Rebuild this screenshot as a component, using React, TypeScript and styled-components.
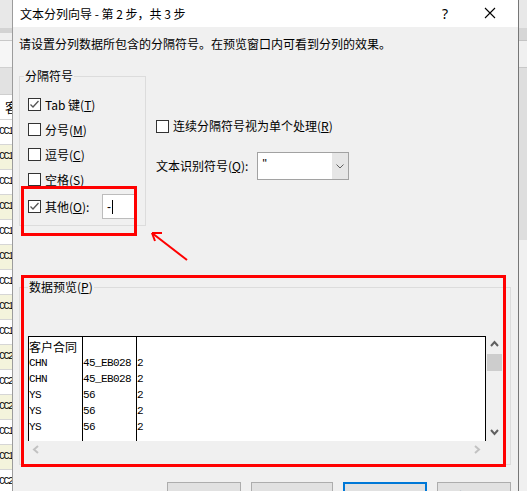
import React from 'react';
import styled, { createGlobalStyle } from 'styled-components';

const GlobalStyle = createGlobalStyle`
  html, body {
    margin: 0;
    padding: 0;
  }
  body {
    width: 527px;
    height: 491px;
    overflow: hidden;
    background: #f0f0f0;
    font-family: "Noto Sans CJK SC", "Microsoft YaHei", sans-serif;
    font-size: 12px;
    color: #000;
  }
`;

const Screen = styled.div`
  display: flex;
  width: 527px;
  height: 491px;
  overflow: hidden;
`;

// Excel sheet peeking out behind the dialog
const SheetStrip = styled.div<{ $width: number }>`
  width: ${(p) => p.$width}px;
  flex: none;
  display: flex;
  flex-direction: column;
  overflow: hidden;
  background: #f0f0f0;
`;

const Band = styled.div<{ $h: number; $bg: string; $line?: string }>`
  height: ${(p) => p.$h}px;
  flex: none;
  box-sizing: border-box;
  background: ${(p) => p.$bg};
  border-bottom: ${(p) => (p.$line ? `1px solid ${p.$line}` : 'none')};
`;

const SheetRow = styled.div<{ $alt?: boolean; $head?: boolean }>`
  height: 25px;
  flex: none;
  box-sizing: border-box;
  border-bottom: 1px solid #d6d6d6;
  background: ${(p) => (p.$alt ? '#f4f4dc' : '#ffffff')};
  white-space: nowrap;
  line-height: 24px;
  font-family: ${(p) =>
    p.$head ? '"Noto Sans CJK SC", sans-serif' : '"Liberation Mono", monospace'};
  font-size: ${(p) => (p.$head ? '13px' : '10px')};
  letter-spacing: ${(p) => (p.$head ? '0' : '-1.5px')};
  padding-left: ${(p) => (p.$head ? '5px' : '0')};
  text-indent: ${(p) => (p.$head ? '0' : '-1px')};
`;

const Dialog = styled.div`
  width: 507px;
  flex: none;
  box-sizing: border-box;
  border-left: 1px solid #9c9c9c;
  border-right: 1px solid #767676;
  background: #f0f0f0;
  display: flex;
  flex-direction: column;
`;

const TitleBar = styled.div`
  height: 27px;
  flex: none;
  background: #fff;
  display: flex;
  align-items: center;
  padding: 0 5px 0 7px;
`;

const Title = styled.div`
  flex: 1;
  line-height: 16px;
  white-space: pre;
`;

const HelpButton = styled.div`
  width: 30px;
  height: 27px;
  display: flex;
  align-items: center;
  justify-content: center;
  font-family: "Noto Sans", sans-serif;
  font-size: 14px;
  margin-right: 7px;
`;

const CloseButton = styled.div`
  width: 46px;
  height: 27px;
  display: flex;
  align-items: center;
  justify-content: center;
  padding-bottom: 2px;
  box-sizing: border-box;
`;

const Body = styled.div`
  flex: 1;
  position: relative;
  display: flex;
  flex-direction: column;
  padding: 9px 7px 0 6px;
`;

const Intro = styled.div`
  line-height: 16px;
  white-space: nowrap;
`;

const Options = styled.div`
  display: flex;
  margin-top: 16px;
`;

const GroupBox = styled.fieldset<{ $width: number; $pad: string }>`
  width: ${(p) => p.$width}px;
  box-sizing: border-box;
  min-width: 0;
  margin: 0;
  padding: ${(p) => p.$pad};
  border: 1px solid #dcdcdc;
`;

const GroupLegend = styled.legend`
  padding: 0 1px;
  line-height: 16px;
  font-size: 12px;
`;

const Key = styled.span`
  text-decoration: underline;
  text-underline-offset: 1px;
`;

const CheckRow = styled.div<{ $h?: number; $mt?: number; $ml?: number }>`
  display: flex;
  align-items: center;
  gap: 4px;
  height: ${(p) => p.$h ?? 25}px;
  margin-top: ${(p) => p.$mt ?? 0}px;
  margin-left: ${(p) => p.$ml ?? 4}px;
  line-height: 16px;
  white-space: nowrap;
`;

const Box = styled.span`
  width: 13px;
  height: 13px;
  box-sizing: border-box;
  border: 1px solid #333;
  background: #fff;
  flex: none;
  display: flex;
`;

const OtherLabel = styled.span`
  width: 53px;
  flex: none;
`;

const TextInput = styled.div`
  width: 35px;
  height: 25px;
  box-sizing: border-box;
  border: 1px solid #bcbcbc;
  background: #fff;
  display: flex;
  align-items: center;
  padding-left: 4px;
  font-family: "Liberation Sans", sans-serif;
`;

const Caret = styled.span`
  width: 1px;
  height: 14px;
  background: #000;
  margin-left: 1px;
`;

const RightColumn = styled.div`
  display: flex;
  flex-direction: column;
  margin-left: 10px;
  padding-top: 50px;
`;

const QualifierRow = styled.div`
  display: flex;
  align-items: center;
  margin-top: 18px;
  white-space: nowrap;
  line-height: 16px;
`;

const Combo = styled.div`
  width: 92px;
  height: 28px;
  margin-left: 9px;
  box-sizing: border-box;
  border: 1px solid #a2a2a2;
  background: #fff;
  display: flex;
`;

const ComboValue = styled.div`
  flex: 1;
  padding: 3px 0 0 4px;
  font-family: "Liberation Sans", sans-serif;
  font-size: 12px;
`;

const ComboDrop = styled.div`
  width: 16px;
  background: #e6e6e6;
  display: flex;
  align-items: center;
  justify-content: center;
`;

const PreviewArea = styled.div`
  display: grid;
  grid-template-columns: 458px 18px;
  grid-template-rows: 105px 17px;
`;

const Table = styled.div`
  display: flex;
  background: #fff;
  border-top: 1px solid #000;
  border-right: 1px solid #000;
`;

const Column = styled.div<{ $width: number }>`
  width: ${(p) => p.$width}px;
  flex: none;
  box-sizing: border-box;
  border-left: 1px solid #000;
  padding-top: 2px;
`;

const Cell = styled.div<{ $cjk?: boolean }>`
  height: 16px;
  line-height: 16px;
  white-space: nowrap;
  font-family: ${(p) =>
    p.$cjk ? '"Noto Sans CJK SC", sans-serif' : '"Liberation Mono", monospace'};
  font-size: ${(p) => (p.$cjk ? '12px' : '11px')};
  letter-spacing: ${(p) => (p.$cjk ? '0' : '-0.6px')};
`;

const VScroll = styled.div`
  display: flex;
  flex-direction: column;
  background: #f0f0f0;
`;

const ScrollButton = styled.div`
  width: 17px;
  height: 17px;
  flex: none;
  display: flex;
  align-items: center;
  justify-content: center;
`;

const Thumb = styled.div`
  width: 15px;
  height: 17px;
  margin: 1px 0 0 1px;
  background: #cdcdcd;
`;

const Spacer = styled.div`
  flex: 1;
`;

const HScroll = styled.div`
  display: flex;
  justify-content: space-between;
  background: #f0f0f0;
`;

const Buttons = styled.div`
  display: flex;
  justify-content: flex-end;
  gap: 10px;
  margin-top: 17px;
`;

const Button = styled.div<{ $width: number; $focused?: boolean }>`
  width: ${(p) => p.$width}px;
  height: 28px;
  box-sizing: border-box;
  flex: none;
  background: #e1e1e1;
  border: ${(p) => (p.$focused ? '2px solid #0078d7' : '1px solid #adadad')};
  display: flex;
  align-items: center;
  justify-content: center;
`;

// red annotation marks drawn over the dialog
const RedFrame = styled.div<{ $x: number; $y: number; $w: number; $h: number }>`
  position: absolute;
  left: ${(p) => p.$x}px;
  top: ${(p) => p.$y}px;
  width: ${(p) => p.$w}px;
  height: ${(p) => p.$h}px;
  box-sizing: border-box;
  border: 3px solid #ff0000;
  pointer-events: none;
`;

const Arrow = styled.svg`
  position: absolute;
  left: 137px;
  top: 203px;
`;

function Check({ checked }: { checked?: boolean }) {
  return (
    <Box>
      {checked && (
        <svg width="11" height="11" viewBox="0 0 11 11">
          <polyline
            points="1.5,5.5 4,8 9.5,2"
            fill="none"
            stroke="#555"
            strokeWidth="1.3"
          />
        </svg>
      )}
    </Box>
  );
}

function Chevron({ dir, color }: { dir: 'up' | 'down' | 'left' | 'right'; color: string }) {
  const pts = {
    up: '1,6 4.5,2 8,6',
    down: '1,2 4.5,6 8,2',
    left: '6,1 2,4.5 6,8',
    right: '2,1 6,4.5 2,8',
  }[dir];
  return (
    <svg width="9" height="9" viewBox="0 0 9 9">
      <polyline points={pts} fill="none" stroke={color} strokeWidth="2" />
    </svg>
  );
}

const sheetLabels = [
  'CC1', 'CC1', 'CC1', 'CC1', 'CC1', 'CC1', 'CC1', 'CC1',
  'CC1', 'CC2', 'CC2', 'CC2', 'CC1', 'CC1', 'CC2',
];

const previewRows = [
  ['CHN', '45_EB028', '2'],
  ['CHN', '45_EB028', '2'],
  ['YS', '56', '2'],
  ['YS', '56', '2'],
  ['YS', '56', '2'],
];

export default function App() {
  return (
    <Screen>
      <GlobalStyle />
      <SheetStrip $width={12}>
        <Band $h={28} $bg="#e8e8e8" />
        <Band $h={5} $bg="#d3d3d3" />
        <Band $h={8} $bg="#f0f0f0" $line="#c8c8c8" />
        <Band $h={27} $bg="#f6f6f6" $line="#d0d0d0" />
        <Band $h={27} $bg="#e2e2e2" $line="#cfcfcf" />
        <SheetRow $head>客户合同</SheetRow>
        {sheetLabels.map((label, i) => (
          <SheetRow key={i} $alt={i % 2 === 1}>
            {label}00
          </SheetRow>
        ))}
      </SheetStrip>

      <Dialog>
        <TitleBar>
          <Title>文本分列向导 - 第 2 步，共 3 步</Title>
          <HelpButton>?</HelpButton>
          <CloseButton>
            <svg width="12" height="12" viewBox="0 0 12 12">
              <path d="M1 1 L11 11 M11 1 L1 11" stroke="#000" strokeWidth="1.1" />
            </svg>
          </CloseButton>
        </TitleBar>

        <Body>
          <Intro>请设置分列数据所包含的分隔符号。在预览窗口内可看到分列的效果。</Intro>

          <Options>
            <GroupBox $width={127} $pad="8px 4px 6px 4px">
              <GroupLegend>分隔符号</GroupLegend>
              <CheckRow>
                <Check checked />
                <span>
                  Tab 键(<Key>T</Key>)
                </span>
              </CheckRow>
              <CheckRow>
                <Check />
                <span>
                  分号(<Key>M</Key>)
                </span>
              </CheckRow>
              <CheckRow>
                <Check />
                <span>
                  逗号(<Key>C</Key>)
                </span>
              </CheckRow>
              <CheckRow>
                <Check />
                <span>
                  空格(<Key>S</Key>)
                </span>
              </CheckRow>
              <CheckRow $mt={2}>
                <Check checked />
                <OtherLabel>
                  其他(<Key>O</Key>):
                </OtherLabel>
                <TextInput>
                  -<Caret />
                </TextInput>
              </CheckRow>
            </GroupBox>

            <RightColumn>
              <CheckRow $h={16} $ml={0}>
                <Check />
                <span>
                  连续分隔符号视为单个处理(<Key>R</Key>)
                </span>
              </CheckRow>
              <QualifierRow>
                <span>
                  文本识别符号(<Key>Q</Key>):
                </span>
                <Combo>
                  <ComboValue>"</ComboValue>
                  <ComboDrop>
                    <svg width="8" height="5" viewBox="0 0 8 5">
                      <polyline points="0.5,0.5 4,4 7.5,0.5" fill="none" stroke="#606060" strokeWidth="1" />
                    </svg>
                  </ComboDrop>
                </Combo>
              </QualifierRow>
            </RightColumn>
          </Options>

          <GroupBox $width={492} $pad="41px 6px 6px 8px" style={{ marginTop: 53 }}>
            <GroupLegend>
              数据预览(<Key>P</Key>)
            </GroupLegend>
            <PreviewArea>
              <Table>
                <Column $width={54}>
                  <Cell $cjk>客户合同</Cell>
                  {previewRows.map((r, i) => (
                    <Cell key={i}>{r[0]}</Cell>
                  ))}
                </Column>
                <Column $width={54}>
                  <Cell />
                  {previewRows.map((r, i) => (
                    <Cell key={i}>{r[1]}</Cell>
                  ))}
                </Column>
                <Column $width={349}>
                  <Cell />
                  {previewRows.map((r, i) => (
                    <Cell key={i}>{r[2]}</Cell>
                  ))}
                </Column>
              </Table>
              <VScroll>
                <ScrollButton>
                  <Chevron dir="up" color="#606060" />
                </ScrollButton>
                <Thumb />
                <Spacer />
                <ScrollButton>
                  <Chevron dir="down" color="#606060" />
                </ScrollButton>
              </VScroll>
              <HScroll>
                <ScrollButton>
                  <Chevron dir="left" color="#c2c2c2" />
                </ScrollButton>
                <ScrollButton>
                  <Chevron dir="right" color="#c2c2c2" />
                </ScrollButton>
              </HScroll>
              <VScroll />
            </PreviewArea>
          </GroupBox>

          <Buttons>
            <Button $width={74}>取消</Button>
            <Button $width={82}>&lt; 上一步(B)</Button>
            <Button $width={84} $focused>
              下一步(N) &gt;
            </Button>
            <Button $width={74}>完成(F)</Button>
          </Buttons>

          <RedFrame $x={8} $y={159} $w={116} $h={50} />
          <RedFrame $x={8} $y={248} $w={485} $h={192} />
          <Arrow width="40" height="32" viewBox="0 0 40 32">
            <path d="M2 3 L37 30" stroke="#ff0000" strokeWidth="2" fill="none" />
            <path d="M2 3 L12 3 M2 3 L5 11" stroke="#ff0000" strokeWidth="2" fill="none" />
          </Arrow>
        </Body>
      </Dialog>

      <SheetStrip $width={8}>
        <Band $h={28} $bg="#e8e8e8" />
        <Band $h={13} $bg="#d6d6d6" $line="#c4c4c4" />
        <Band $h={27} $bg="#f0f0f0" $line="#c8c8c8" />
        <Band $h={172} $bg="#dedede" />
      </SheetStrip>
    </Screen>
  );
}
